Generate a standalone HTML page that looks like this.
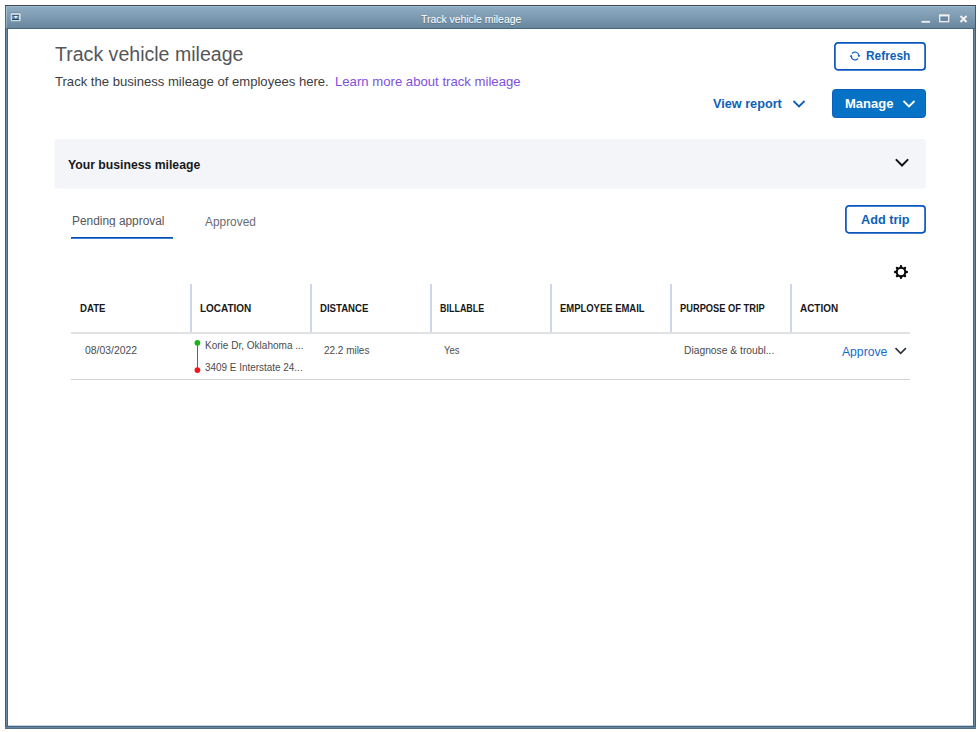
<!DOCTYPE html>
<html><head><meta charset="utf-8">
<style>
*{box-sizing:border-box;margin:0;padding:0}
html,body{width:980px;height:732px;background:#fff;overflow:hidden}
body{font-family:"Liberation Sans",sans-serif;position:relative;color:#393a3d}
.abs{position:absolute;white-space:nowrap;transform-origin:0 0}
#win{position:absolute;left:5px;top:5px;width:971px;height:724px;background:#fff}
#tbar{position:absolute;left:0;top:0;width:971px;height:24px;background:linear-gradient(#41464b 0,#41464b 1px,#9bb9d1 1px,#9bb9d1 2px,#8fabc1 2px,#7c9ab1 12px,#68869c 23px,#456780 23px,#456780 24px)}
#bl{position:absolute;left:0;top:24px;width:3px;height:698px;background:linear-gradient(90deg,#3f5c78 0,#3f5c78 1px,#6a8aa6 1px,#6a8aa6 2px,#446682 2px)}
#br{position:absolute;right:0;top:24px;width:3px;height:698px;background:linear-gradient(90deg,#446682 0,#446682 1px,#6a8aa6 1px,#6a8aa6 2px,#3f5c78 2px)}
#bb{position:absolute;left:0;bottom:0;width:971px;height:3px;background:linear-gradient(#446682 0,#446682 1px,#6484a0 1px,#6484a0 2px,#546c84 2px)}#bb2{position:absolute;left:3px;bottom:3px;width:965px;height:1px;background:#c4d0dc}
#ttl{left:416px;top:8px;font-size:11px;color:#fff;line-height:13px;transform:scaleX(.946);text-shadow:0 1px 0 rgba(40,60,80,.35)}
h1{font-weight:400;font-size:20px;color:#55565a;line-height:24px}
.btn{position:absolute;border-radius:4px;color:#0d5fb8;font-weight:700;font-size:13px;white-space:nowrap}
.btn svg.o{position:absolute;left:0;top:0}
.btn span{position:absolute;white-space:nowrap;transform-origin:0 0;line-height:16px}
.th{position:absolute;top:303px;font-size:10px;font-weight:700;color:#17181a;line-height:12px;white-space:nowrap;transform-origin:0 0}
.sep{position:absolute;top:284px;width:2px;height:50px;background:#ccd8ea}
.td{position:absolute;font-size:11px;color:#4a4b4e;line-height:13px;white-space:nowrap;transform-origin:0 0}
</style></head><body>
<div id="win">
 <div id="tbar"></div><div class="abs" style="left:0;top:1px;width:1px;height:23px;background:#4b6a86"></div><div class="abs" style="left:1px;top:2px;width:1px;height:21px;background:rgba(190,220,240,.45)"></div><div class="abs" style="left:970px;top:1px;width:1px;height:23px;background:#3f5a74"></div><div id="bl"></div><div id="br"></div><div id="bb"></div><div id="bb2"></div>
 <div id="ttl" class="abs">Track vehicle mileage</div>
 <!-- titlebar icons -->
 <svg class="abs" style="left:5px;top:7px" width="12" height="10" viewBox="0 0 12 10"><rect x=".75" y=".6" width="9.950" height="1" rx=".5" fill="#4a6a88" opacity=".6"/><rect x=".75" y="1" width="9.950" height="8.200" rx="1" fill="#dddddb" opacity=".92"/><rect x="2.100" y="2.800" width="6.900" height="5.200" fill="#5d89b5"/><rect x="2.100" y="3" width="6.900" height=".7" fill="#2c4c6c"/><rect x="2.100" y="7.200" width="6.900" height=".8" fill="#16324e"/><path d="M3.800 4.100h4l-2 2.500z" fill="#f2f2f0"/></svg>
 <svg class="abs" style="left:915px;top:8px" width="50" height="12" viewBox="0 0 50 12"><path d="M1.5 8.8h8.5" stroke="#f2f0ee" stroke-width="1.8"/><rect x="19.700" y="2.200" width="9" height="6.500" fill="#6a89a4" stroke="#f2efec" stroke-width="1.300"/><path d="M19.050 2.500h10.300" stroke="#f2efec" stroke-width="1.900"/><path d="M40.500 3l6 6M46.500 3l-6 6" stroke="#f2f0ee" stroke-width="2"/></svg>
</div>

<h1 class="abs" id="h1" style="left:55px;top:42px;transform:scaleX(.978)">Track vehicle mileage</h1>
<div class="abs" id="sub" style="left:55px;top:73px;font-size:13px;line-height:16px;color:#3c3d40;transform:translateY(.5px) scaleX(1.0066)">Track the business mileage of employees here.</div>
<div class="abs" id="lnk" style="left:334.500px;top:73px;font-size:13px;line-height:16px;color:#8050de;transform:translateY(.5px) scaleX(1.011)">Learn more about track mileage</div>

<div class="btn" style="left:834px;top:41.500px;width:92px;height:28.500px" id="refresh">
 <svg class="o" width="92" height="29" viewBox="0 0 92 29"><rect x=".9" y=".9" width="90.200" height="26.900" rx="3" fill="#fff" stroke="#0a56bd" stroke-width="1.700"/></svg>
 <svg style="position:absolute;left:15.200px;top:8.500px" width="12" height="12" viewBox="0 0 12 12"><path d="M3.010 3.490A3.900 3.900 0 0 1 9.900 5.600M8.990 8.510A3.900 3.900 0 0 1 2.100 6.400" fill="none" stroke="#1565c4" stroke-width="1.250"/><path d="M8.500 5.300h2.900l-1.450 2.300zM.65 6.700h2.900L2.100 4.400z" fill="#0b55b8"/></svg>
 <span id="rft" style="left:31.700px;top:6px;transform:scaleX(.915)">Refresh</span>
</div>
<div class="abs" id="vr" style="left:713px;top:96px;font-size:13px;font-weight:700;color:#0d5fb8;line-height:16px;transform:scaleX(.975)">View report</div>
<svg class="abs" style="left:792px;top:98.500px" width="14" height="10" viewBox="0 0 14 10"><path d="M1.500 2l5.500 5.500L12.500 2" fill="none" stroke="#0d5fb8" stroke-width="1.800"/></svg>
<div class="btn" style="left:832px;top:89px;width:94px;height:29px;background:#0572c5;border:1px solid #0a5fc0;border-radius:3.500px;color:#fff" id="manage">
 <span id="mgt" style="left:12px;top:6px">Manage</span>
 <svg style="position:absolute;left:69px;top:9px" width="14" height="10" viewBox="0 0 14 10"><path d="M1.500 2l5.500 5.500L12.500 2" fill="none" stroke="#fff" stroke-width="1.800"/></svg>
</div>

<div class="abs" style="left:55px;top:139px;width:871px;height:50px;background:linear-gradient(#f4f5f8 0,#f4f5f8 49px,#fafafc 49px);border-radius:3px;box-shadow:-1px 0 0 0 rgba(244,245,248,.55)"></div>
<div class="abs" id="ybm" style="left:68px;top:157px;font-size:13px;font-weight:700;color:#17181a;line-height:16px;transform:scaleX(.94)">Your business mileage</div>
<svg class="abs" style="left:894px;top:157px" width="16" height="12" viewBox="0 0 16 12"><path d="M2.400 2.900l5.600 5.600 5.600-5.600" fill="none" stroke="#111" stroke-width="2" stroke-linecap="round"/></svg>

<div class="abs" id="tab1" style="left:71.500px;top:214px;font-size:12px;color:#55575b;line-height:15px;height:12.500px;overflow:hidden;transform:scaleX(.99)">Pending approval</div>
<div class="abs" style="left:71px;top:237px;width:102px;height:2px;background:linear-gradient(#064cb6 0,#064cb6 1px,#3f7fd0 1px)"></div>
<div class="abs" id="tab2" style="left:205px;top:215px;font-size:12px;color:#6b6c72;line-height:15px;transform:scaleX(.99)">Approved</div>
<div class="btn" style="left:845px;top:205px;width:81px;height:29px" id="addtrip">
 <svg class="o" width="81" height="29" viewBox="0 0 81 29"><rect x=".9" y=".9" width="79.200" height="26.900" rx="3" fill="#fff" stroke="#0a56bd" stroke-width="1.700"/></svg>
 <span id="att" style="left:15.800px;top:6.500px;transform:scaleX(.975)">Add trip</span>
</div>

<svg class="abs" style="left:893.200px;top:264px" width="16" height="16" viewBox="0 0 16 16"><circle cx="8" cy="8" r="4.300" fill="none" stroke="#0a0a0a" stroke-width="2.100"/><path d="M12.80 8.00L13.85 8.00M11.39 11.39L12.03 12.03M8.00 12.80L8.00 13.85M4.61 11.39L3.97 12.03M3.20 8.00L2.15 8.00M4.61 4.61L3.97 3.97M8.00 3.20L8.00 2.15M11.39 4.61L12.03 3.97" stroke="#0a0a0a" stroke-width="2.400" stroke-linecap="round" fill="none"/></svg>

<!-- table -->
<div class="sep" style="left:190px"></div><div class="sep" style="left:310px"></div><div class="sep" style="left:430px"></div><div class="sep" style="left:550px"></div><div class="sep" style="left:670px"></div><div class="sep" style="left:790px"></div>
<div class="abs" style="left:71px;top:332px;width:839px;height:2px;background:#e1e1e3"></div>
<div class="abs" style="left:71px;top:379px;width:839px;height:1px;background:#d2d3d6"></div>
<div class="th" id="th1" style="left:80px;transform:scaleX(.96)">DATE</div>
<div class="th" id="th2" style="left:200px;transform:scaleX(.995)">LOCATION</div>
<div class="th" id="th3" style="left:320px;transform:scaleX(.96)">DISTANCE</div>
<div class="th" id="th4" style="left:439.500px;transform:scaleX(.895)">BILLABLE</div>
<div class="th" id="th5" style="left:560px;transform:scaleX(.945)">EMPLOYEE EMAIL</div>
<div class="th" id="th6" style="left:680px;transform:scaleX(.93)">PURPOSE OF TRIP</div>
<div class="th" id="th7" style="left:799.500px;transform:scaleX(.995)">ACTION</div>

<div class="td" id="td1" style="left:84.500px;top:344px;transform:scaleX(.945)">08/03/2022</div>
<svg class="abs" style="left:192px;top:338px" width="12" height="38" viewBox="0 0 12 38"><path d="M5.500 5v27" stroke="#60636a" stroke-width="1"/><circle cx="5.400" cy="4.800" r="2.900" fill="#18b418"/><circle cx="5.400" cy="32.100" r="2.900" fill="#f4141e"/></svg>
<div class="td" id="td2" style="left:205px;top:339px;font-size:10.500px;transform:translateY(.4px) scaleX(.955)">Korie Dr, Oklahoma ...</div>
<div class="td" id="td3" style="left:205px;top:361px;font-size:10.500px;transform:translateY(.4px) scaleX(.945)">3409 E Interstate 24...</div>
<div class="td" id="td4" style="left:324px;top:344px;transform:scaleX(.905)">22.2 miles</div>
<div class="td" id="td5" style="left:444px;top:344px;transform:scaleX(.86)">Yes</div>
<div class="td" id="td6" style="left:684px;top:344px;transform:scaleX(.935)">Diagnose &amp; troubl...</div>
<div class="td" id="approve" style="left:842px;top:344px;font-size:13px;color:#176acb;line-height:15px;height:13.600px;overflow:hidden;transform:scaleX(.935)">Approve</div>
<svg class="abs" style="left:893.800px;top:346px" width="14" height="10" viewBox="0 0 14 10"><path d="M1.500 2.100l5.200 5.200 5.200-5.200" fill="none" stroke="#30353d" stroke-width="1.700"/></svg>
</body></html>
